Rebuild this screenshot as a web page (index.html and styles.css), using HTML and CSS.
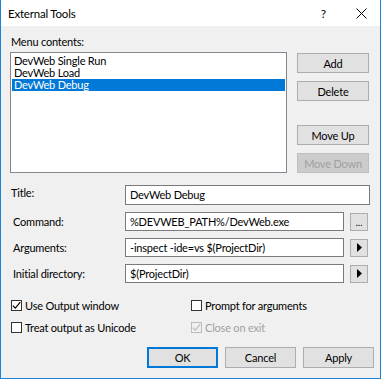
FILE: index.html
```html
<!DOCTYPE html>
<html>
<head>
	<meta charset="utf-8">
	<title>External Tools</title>
	<link rel="stylesheet" href="styles.css">
</head>
<body>
	<div class="dialog">
		<div class="titlebar">
			<span class="title">External Tools</span>
			<span class="help">?</span>
			<svg class="close" width="11" height="11" viewBox="0 0 11 11"><path d="M0.5 0.5 L10.5 10.5 M10.5 0.5 L0.5 10.5" stroke="#000" stroke-width="1" fill="none"/></svg>
		</div>

		<div class="content">
			<div class="caption">Menu contents:</div>
			<div class="top-row">
				<ul class="listbox">
					<li>DevWeb Single Run</li>
					<li>DevWeb Load</li>
					<li class="selected">DevWeb Debug</li>
				</ul>
				<div class="side-buttons">
					<button class="btn">Add</button>
					<button class="btn">Delete</button>
					<button class="btn spaced">Move Up</button>
					<button class="btn" disabled>Move Down</button>
				</div>
			</div>

			<div class="fields">
				<div class="field field-title">
					<label class="first">Title:</label>
					<div class="textbox">DevWeb Debug</div>
				</div>
				<div class="field">
					<label>Command:</label>
					<div class="textbox">%DEVWEB_PATH%/DevWeb.exe</div>
					<button class="mini">...</button>
				</div>
				<div class="field">
					<label>Arguments:</label>
					<div class="textbox">-inspect -ide=vs $(ProjectDir)</div>
					<button class="mini"><svg width="5" height="9" viewBox="0 0 5 9"><path d="M0 0 L5 4.5 L0 9 Z" fill="#000"/></svg></button>
				</div>
				<div class="field">
					<label>Initial directory:</label>
					<div class="textbox">$(ProjectDir)</div>
					<button class="mini"><svg width="5" height="9" viewBox="0 0 5 9"><path d="M0 0 L5 4.5 L0 9 Z" fill="#000"/></svg></button>
				</div>
			</div>

			<div class="checks">
				<div class="check"><span class="box"><svg width="9" height="9" viewBox="0 0 9 9"><path d="M0.8 4.6 L3.3 7.2 L8.3 1.2" stroke="#000" stroke-width="1.2" fill="none"/></svg></span>Use Output window</div>
				<div class="check"><span class="box"></span>Prompt for arguments</div>
				<div class="check"><span class="box"></span>Treat output as Unicode</div>
				<div class="check disabled"><span class="box"><svg width="9" height="9" viewBox="0 0 9 9"><path d="M0.8 4.6 L3.3 7.2 L8.3 1.2" stroke="#bcbcbc" stroke-width="1.2" fill="none"/></svg></span>Close on exit</div>
			</div>

			<div class="footer">
				<button class="btn wide default">OK</button>
				<button class="btn wide">Cancel</button>
				<button class="btn wide">Apply</button>
			</div>
		</div>
	</div>
</body>
</html>
```

FILE: styles.css
```css
body {
	margin: 0; font-family: 'Lato', 'Noto Sans', sans-serif; font-size: 11px; letter-spacing: -0.2px; color: #000;
}
.dialog {
	width: 381px; height: 379px; box-sizing: border-box; background: #f0f0f0;
	border: 1px solid #1883d7; border-top: none; display: flex; flex-direction: column;
}
.titlebar {
	height: 26px; background: #fff; display: flex; align-items: center; padding-left: 7px; padding-right: 13px;
}
.title { flex: 1; font-size: 11.5px; }
.help { margin-right: 30px; font-size: 12px; }
.close { display: block; }

.content { padding: 8px 0 0 9px; }
.caption { line-height: 16px; margin-bottom: 2px; padding-left: 1px; }

.top-row { display: flex; height: 121px; }
.listbox {
	list-style: none; margin: 0; padding: 2px 1px 1px; width: 277px; box-sizing: border-box;
	background: #fff; border: 1px solid #828790;
}
.listbox li { line-height: 12px; padding-left: 2px; height: 12px; }
.listbox li.selected { background: #0078d7; color: #fff; }

.side-buttons { display: flex; flex-direction: column; margin-left: 10px; width: 72px; gap: 8px; padding-top: 1px; }
.side-buttons .spaced { margin-top: 16px; }

.btn {
	font: inherit; letter-spacing: inherit; height: 21px; padding: 0; background: #e1e1e1; color: #000;
	border: 1px solid #adadad; box-sizing: border-box;
}
.btn:disabled { background: #cccccc; border-color: #bfbfbf; color: #a0a0a0; }
.btn.default { border: 2px solid #0078d7; }
.btn.wide { width: 71px; }

.fields { margin-top: 12px; width: 360px; display: flex; flex-direction: column; gap: 7px; }
.field { display: flex; align-items: center; height: 19px; }
.field-title { height: 20px; }
.field label { width: 112px; padding-left: 3px; }
.field label.first { padding-left: 1px; width: 114px; margin-top: -5px; }
.textbox {
	flex: 1; height: 100%; box-sizing: border-box; background: #fff; border: 1px solid #7a7a7a;
	padding-left: 4px; line-height: 17px; white-space: nowrap; overflow: hidden;
}
.mini {
	width: 18px; height: 18px; margin-left: 6px; margin-right: 2px; padding: 0; box-sizing: border-box;
	background: #e1e1e1; border: 1px solid #adadad; font: inherit; font-size: 10px; line-height: 10px;
	display: flex; align-items: center; justify-content: center;
}
.mini svg { display: block; }

.checks { margin-top: 14px; display: grid; grid-template-columns: 180px 180px; row-gap: 6px; padding-left: 1px; }
.check { display: flex; align-items: center; height: 16px; }
.check .box {
	width: 11px; height: 11px; box-sizing: border-box; border: 1px solid #333; background: #fff;
	margin-right: 3px; display: flex; align-items: center; justify-content: center;
}
.check .box svg { display: block; }
.check.disabled { color: #a0a0a0; }
.check.disabled .box { border-color: #bcbcbc; background: #f0f0f0; }

.footer { margin-top: 12px; width: 364px; display: flex; justify-content: flex-end; gap: 7px; }
```
